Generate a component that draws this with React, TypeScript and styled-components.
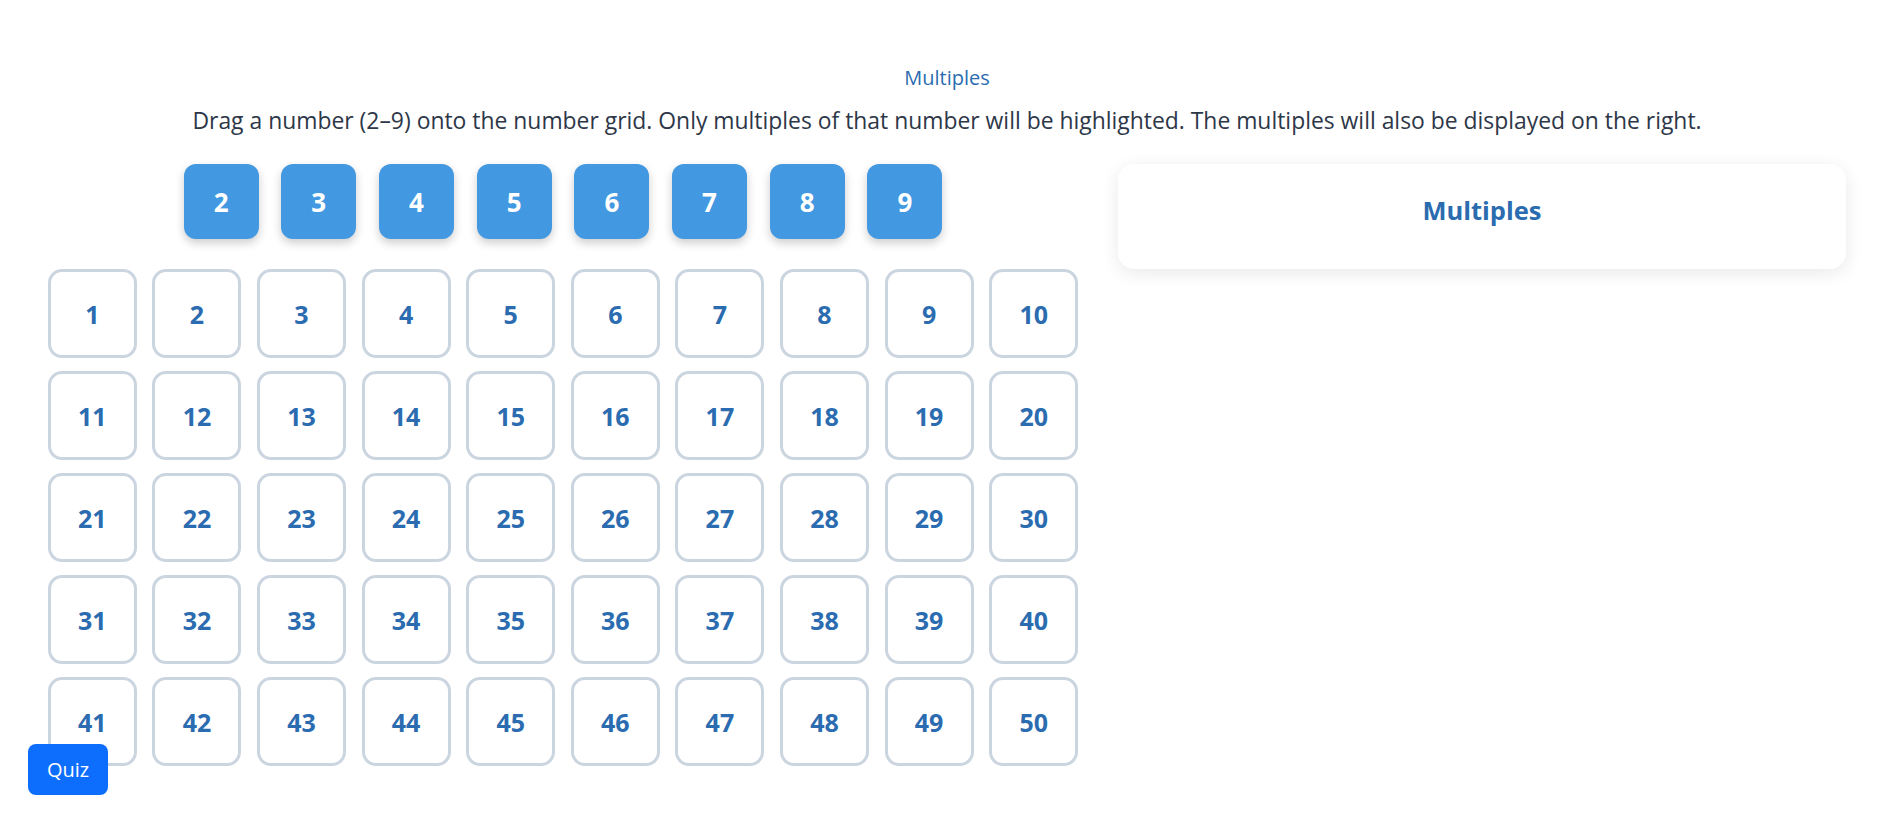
import React from 'react';
import styled, { createGlobalStyle } from 'styled-components';

const GlobalStyle = createGlobalStyle`
  html, body {
    margin: 0;
    padding: 0;
    background: #ffffff;
    font-family: "Open Sans", "Noto Sans", sans-serif;
  }
  * {
    box-sizing: border-box;
  }
`;

const tiles = [2, 3, 4, 5, 6, 7, 8, 9];
const cells = Array.from({ length: 50 }, (_, i) => i + 1);

const App = () => {
  return (
    <Page>
      <GlobalStyle />
      <Header>
        <Title>Multiples</Title>
        <Instructions>
          Drag a number (2–9) onto the number grid. Only multiples of that number will be
          highlighted. The multiples will also be displayed on the right.
        </Instructions>
      </Header>
      <Main>
        <LeftColumn>
          <TileRow>
            {tiles.map((n) => (
              <Tile key={n} draggable>
                {n}
              </Tile>
            ))}
          </TileRow>
          <Grid>
            {cells.map((n) => (
              <Cell key={n}>{n}</Cell>
            ))}
          </Grid>
        </LeftColumn>
        <Panel>
          <PanelTitle>Multiples</PanelTitle>
        </Panel>
      </Main>
      <QuizButton>Quiz</QuizButton>
    </Page>
  );
};

export default App;

const Page = styled.div`
  min-height: 814px;
  padding-top: 64px;
`;

const Header = styled.div`
  display: flex;
  flex-direction: column;
  align-items: center;
  padding-left: 15px;
`;

const Title = styled.h1`
  margin: 0;
  font-size: 20px;
  font-weight: 400;
  line-height: 28px;
  color: #2b6cb0;
`;

const Instructions = styled.p`
  margin: 12px 0 0;
  font-size: 22.9px;
  line-height: 34px;
  color: #2d3748;
  white-space: nowrap;
`;

const Main = styled.div`
  display: flex;
  align-items: flex-start;
  gap: 24px;
  padding: 0 33px 0 32px;
  margin-top: 26px;
`;

const LeftColumn = styled.div`
  width: 1062px;
  display: flex;
  flex-direction: column;
  align-items: center;
`;

const TileRow = styled.div`
  display: flex;
  gap: 22.7px;
  margin-bottom: 30px;
`;

const Tile = styled.div`
  width: 75px;
  height: 75px;
  display: flex;
  align-items: center;
  justify-content: center;
  border-radius: 12px;
  background: #4299e1;
  color: #ffffff;
  font-size: 26px;
  font-weight: 700;
  box-shadow: 0 4px 10px rgba(0, 0, 0, 0.2);
  cursor: grab;
`;

const Grid = styled.div`
  display: grid;
  grid-template-columns: repeat(10, 89px);
  column-gap: 15.6px;
  row-gap: 13px;
`;

const Cell = styled.div`
  width: 89px;
  height: 89px;
  display: flex;
  align-items: center;
  justify-content: center;
  border: 3px solid #cbd5e0;
  border-radius: 14px;
  background: #ffffff;
  color: #2b6cb0;
  font-size: 25px;
  font-weight: 700;
`;

const Panel = styled.div`
  flex: 1;
  height: 105px;
  display: flex;
  align-items: center;
  justify-content: center;
  padding-bottom: 14px;
  border-radius: 16px;
  background: #ffffff;
  box-shadow: 0 4px 18px rgba(0, 0, 0, 0.09);
`;

const PanelTitle = styled.h2`
  margin: 0;
  font-size: 25.5px;
  font-weight: 700;
  color: #2b6cb0;
`;

const QuizButton = styled.button`
  position: fixed;
  left: 28px;
  bottom: 19px;
  width: 80px;
  height: 51px;
  border: none;
  border-radius: 8px;
  background: #0d6efd;
  color: #ffffff;
  font-family: "Open Sans", "Noto Sans", sans-serif;
  font-size: 20px;
  cursor: pointer;
`;
